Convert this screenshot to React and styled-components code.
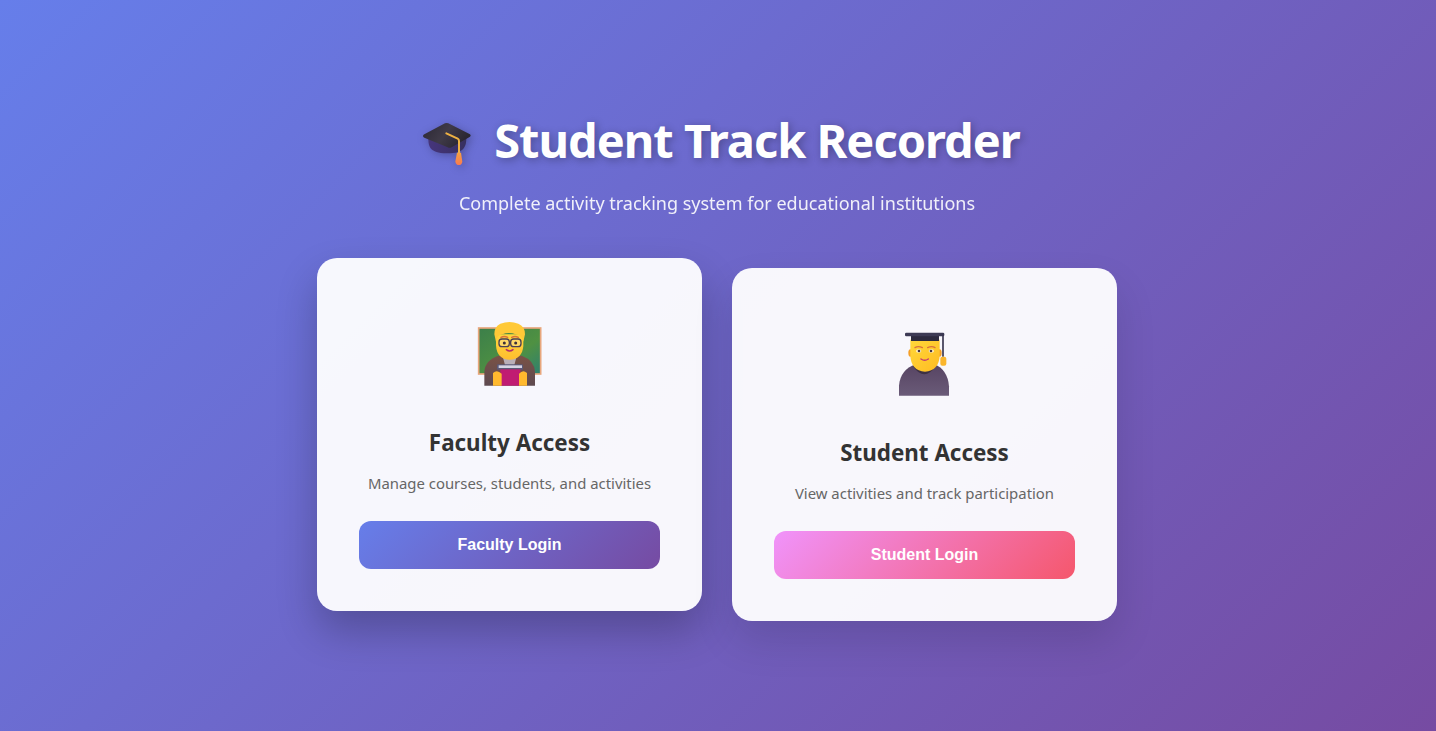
import React from 'react';
import styled, { createGlobalStyle } from 'styled-components';

const GlobalStyle = createGlobalStyle`
  * {
    margin: 0;
    padding: 0;
    box-sizing: border-box;
  }

  body {
    font-family: "Noto Sans", "Open Sans", sans-serif;
    background: linear-gradient(135deg, #667eea 0%, #764ba2 100%);
    min-height: 100vh;
  }
`;

function CapIcon() {
  return (
    <CapSvg viewBox="15 0 225 225" aria-hidden="true">
      <defs>
        <linearGradient id="capTop" x1="0" y1="0" x2="1" y2="0.4">
          <stop offset="0" stopColor="#2b2733" />
          <stop offset="0.55" stopColor="#3f3a47" />
          <stop offset="1" stopColor="#2a2632" />
        </linearGradient>
        <linearGradient id="capBase" x1="0" y1="0" x2="1" y2="0">
          <stop offset="0" stopColor="#46357c" />
          <stop offset="1" stopColor="#37305f" />
        </linearGradient>
        <linearGradient id="tassel" x1="0" y1="0" x2="0" y2="1">
          <stop offset="0" stopColor="#f5a142" />
          <stop offset="1" stopColor="#f97a50" />
        </linearGradient>
      </defs>
      <path d="M58 98 C58 125 62 143 112 145 C165 146 172 125 172 98 L115 70 Z" fill="url(#capBase)" />
      <path d="M42 93 Q42 90 46 88 L108 55 Q113 53 118 55 L183 88 Q187 92 183 95 L128 127 Q122 130 116 127 L46 98 Q42 96 42 93 Z" fill="url(#capTop)" />
      <path d="M112 85 L146 101 Q150 103 150 108 L150 145" fill="none" stroke="#eeb143" strokeWidth="6" strokeLinecap="round" />
      <path d="M144 143 L156 143 L160 170 Q158 180 150 180 Q141 180 139 170 Z" fill="url(#tassel)" />
    </CapSvg>
  );
}

function TeacherIcon() {
  return (
    <EmojiSvg viewBox="0 0 270 240" aria-hidden="true">
      <defs>
        <linearGradient id="board" x1="0" y1="0" x2="1" y2="1">
          <stop offset="0" stopColor="#3c7f4a" />
          <stop offset="0.6" stopColor="#4f9142" />
          <stop offset="1" stopColor="#2f8070" />
        </linearGradient>
        <linearGradient id="jacket" x1="0" y1="0" x2="0" y2="1">
          <stop offset="0" stopColor="#7a5246" />
          <stop offset="1" stopColor="#5e4a50" />
        </linearGradient>
        <linearGradient id="skin" x1="0" y1="0" x2="0" y2="1">
          <stop offset="0" stopColor="#ffd63d" />
          <stop offset="1" stopColor="#ffbe2e" />
        </linearGradient>
      </defs>
      <rect x="41" y="39" width="186" height="138" fill="url(#board)" stroke="#e8a67c" strokeWidth="5" />
      <path d="M58 212 L58 170 Q60 136 100 122 L170 122 Q208 136 210 170 L210 212 Z" fill="url(#jacket)" />
      <path d="M112 120 L156 120 L148 150 L120 150 Z" fill="#b9aeb8" />
      <path d="M93 58 L175 58 L175 92 Q172 132 134 134 Q96 132 93 92 Z" fill="url(#skin)" />
      <path d="M88 58 Q88 34 106 26 Q134 16 160 26 Q180 34 180 58 L175 80 Q170 60 152 58 Q132 50 112 58 Q96 60 93 80 Z" fill="#ffc937" />
      <path d="M108 67 Q118 62 128 67 M140 67 Q150 62 160 67" stroke="#d9713c" strokeWidth="4" fill="none" strokeLinecap="round" />
      <rect x="102" y="72" width="31" height="23" rx="9" fill="#ffd968" stroke="#4a4055" strokeWidth="4" />
      <rect x="137" y="72" width="31" height="23" rx="9" fill="#ffd968" stroke="#4a4055" strokeWidth="4" />
      <path d="M133 80 L137 80" stroke="#4a4055" strokeWidth="4" />
      <circle cx="118" cy="84" r="4.5" fill="#3a2f3a" />
      <circle cx="152" cy="84" r="4.5" fill="#3a2f3a" />
      <path d="M124 104 Q134 112 144 104" stroke="#b42d6a" strokeWidth="4.5" fill="none" strokeLinecap="round" />
      <rect x="96" y="148" width="78" height="16" rx="3" fill="#5b5a78" />
      <rect x="101" y="151" width="70" height="8" fill="#d5d3e3" />
      <rect x="106" y="163" width="60" height="49" fill="#c01c72" />
      <path d="M84 174 Q96 162 110 176 L110 212 L84 212 Z" fill="#ffb92e" />
      <path d="M162 176 Q174 162 186 174 L186 212 L162 212 Z" fill="#ffb92e" />
    </EmojiSvg>
  );
}

function StudentIcon() {
  return (
    <EmojiSvg viewBox="-15 0 270 240" aria-hidden="true">
      <defs>
        <linearGradient id="gown" x1="0" y1="0" x2="0" y2="1">
          <stop offset="0" stopColor="#574463" />
          <stop offset="1" stopColor="#6a5b78" />
        </linearGradient>
        <linearGradient id="face" x1="0" y1="0" x2="1" y2="1">
          <stop offset="0" stopColor="#ffd83a" />
          <stop offset="1" stopColor="#ffbb22" />
        </linearGradient>
      </defs>
      <path d="M42 212 L42 182 Q46 134 92 118 L148 118 Q188 134 192 184 L192 212 Z" fill="url(#gown)" />
      <path d="M84 124 Q118 172 152 124 L134 110 L100 110 Z" fill="#3d3144" />
      <ellipse cx="76" cy="84" rx="6" ry="11" fill="#f59f28" />
      <ellipse cx="164" cy="84" rx="6" ry="11" fill="#f59f28" />
      <path d="M76 44 L164 44 L164 92 Q162 136 120 140 Q78 136 76 92 Z" fill="url(#face)" />
      <path d="M90 68 Q100 62 112 68 M128 68 Q140 62 150 68" stroke="#d9713c" strokeWidth="4" fill="none" strokeLinecap="round" />
      <ellipse cx="101" cy="78" rx="8" ry="5" fill="#fff3d0" />
      <ellipse cx="139" cy="78" rx="8" ry="5" fill="#fff3d0" />
      <circle cx="102" cy="78" r="4" fill="#453344" />
      <circle cx="138" cy="78" r="4" fill="#453344" />
      <path d="M108 102 Q119 110 130 102" stroke="#c63a70" strokeWidth="4.5" fill="none" strokeLinecap="round" />
      <rect x="78" y="33" width="84" height="15" fill="#2d2a3e" />
      <path d="M60 27 Q60 23 64 23 L174 23 Q178 23 178 27 L178 30 Q178 34 174 34 L64 34 Q60 34 60 30 Z" fill="#3d3a54" />
      <path d="M174 28 L174 95" stroke="#3a3750" strokeWidth="5" />
      <rect x="166" y="95" width="18" height="27" rx="6" fill="#fbb62d" />
    </EmojiSvg>
  );
}

const accessCards = [
  {
    icon: <TeacherIcon />,
    title: 'Faculty Access',
    text: 'Manage courses, students, and activities',
    button: 'Faculty Login',
    from: '#667eea',
    to: '#764ba2',
  },
  {
    icon: <StudentIcon />,
    title: 'Student Access',
    text: 'View activities and track participation',
    button: 'Student Login',
    from: '#f093fb',
    to: '#f5576c',
    lowered: true,
  },
];

function App() {
  return (
    <>
      <GlobalStyle />
      <Page>
        <Header>
          <Title>
            <CapIcon />
            Student Track Recorder
          </Title>
          <Subtitle>Complete activity tracking system for educational institutions</Subtitle>
        </Header>
        <Cards>
          {accessCards.map((card) => (
            <Card key={card.title} $lowered={card.lowered}>
              <IconSlot>{card.icon}</IconSlot>
              <CardTitle>{card.title}</CardTitle>
              <CardText>{card.text}</CardText>
              <LoginButton $from={card.from} $to={card.to}>{card.button}</LoginButton>
            </Card>
          ))}
        </Cards>
      </Page>
    </>
  );
}

export default App;

const Page = styled.div`
  min-height: 100vh;
  display: flex;
  flex-direction: column;
  align-items: center;
  padding: 108px 2px 0 0;
`;

const Header = styled.header`
  text-align: center;
  color: white;
  margin-bottom: 42px;
`;

const Title = styled.h1`
  display: flex;
  align-items: center;
  justify-content: center;
  height: 65px;
  font-size: 47px;
  line-height: 65px;
  font-weight: 700;
  letter-spacing: -1px;
  text-shadow: 2px 2px 8px rgba(0, 0, 0, 0.3);
  margin-bottom: 18px;
`;

const CapSvg = styled.svg`
  width: 75px;
  height: 75px;
  margin: 4px 5px 0 0;
  flex-shrink: 0;
  filter: drop-shadow(2px 2px 4px rgba(0, 0, 0, 0.25));
`;

const Subtitle = styled.p`
  font-size: 18px;
  line-height: 25px;
  font-weight: 400;
  opacity: 0.9;
`;

const Cards = styled.div`
  display: flex;
  align-items: flex-start;
  gap: 30px;
`;

const Card = styled.div`
  width: 385px;
  height: 353px;
  margin-top: ${(props) => (props.$lowered ? '10px' : '0')};
  padding: 42px;
  background: rgba(255, 255, 255, 0.95);
  border-radius: 20px;
  box-shadow: 0 20px 40px rgba(0, 0, 0, ${(props) => (props.$lowered ? '0.12' : '0.24')});
  text-align: center;
`;

const IconSlot = styled.div`
  height: 127px;
  padding-top: 15px;
  display: flex;
  justify-content: center;
`;

const EmojiSvg = styled.svg`
  width: 90px;
  height: 80px;
`;

const CardTitle = styled.h2`
  font-size: 22.4px;
  line-height: 32px;
  font-weight: 700;
  color: #333;
  margin-bottom: 12px;
`;

const CardText = styled.p`
  font-size: 14.9px;
  line-height: 24px;
  color: #666;
  margin-bottom: 26px;
`;

const LoginButton = styled.button`
  display: block;
  width: 100%;
  height: 48px;
  border: none;
  border-radius: 12px;
  color: white;
  font-family: "Liberation Sans", Arial, sans-serif;
  font-size: 16px;
  font-weight: 700;
  background: linear-gradient(135deg, ${(props) => props.$from} 0%, ${(props) => props.$to} 100%);
  cursor: pointer;
`;
